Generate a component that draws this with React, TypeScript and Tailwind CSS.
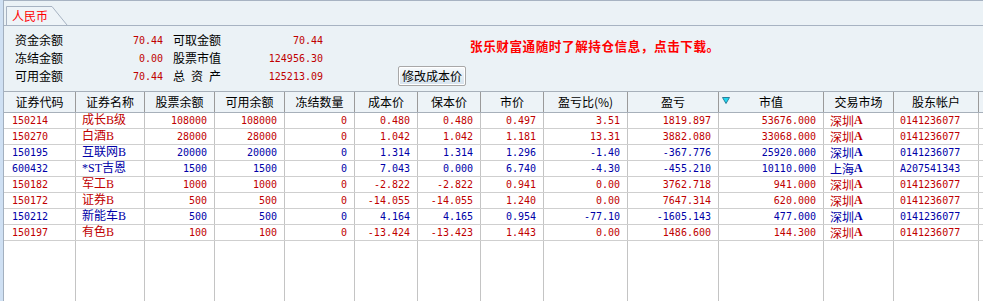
import React from "react";

type Row = {
  c: string[];
  red: boolean;
};

const rows: Row[] = [
  { c: ["150214", "成长B级", "108000", "108000", "0", "0.480", "0.480", "0.497", "3.51", "1819.897", "53676.000", "深圳", "0141236077"], red: true },
  { c: ["150270", "白酒B", "28000", "28000", "0", "1.042", "1.042", "1.181", "13.31", "3882.080", "33068.000", "深圳", "0141236077"], red: true },
  { c: ["150195", "互联网B", "20000", "20000", "0", "1.314", "1.314", "1.296", "-1.40", "-367.776", "25920.000", "深圳", "0141236077"], red: false },
  { c: ["600432", "*ST吉恩", "1500", "1500", "0", "7.043", "0.000", "6.740", "-4.30", "-455.210", "10110.000", "上海", "A207541343"], red: false },
  { c: ["150182", "军工B", "1000", "1000", "0", "-2.822", "-2.822", "0.941", "0.00", "3762.718", "941.000", "深圳", "0141236077"], red: true },
  { c: ["150172", "证券B", "500", "500", "0", "-14.055", "-14.055", "1.240", "0.00", "7647.314", "620.000", "深圳", "0141236077"], red: true },
  { c: ["150212", "新能车B", "500", "500", "0", "4.164", "4.165", "0.954", "-77.10", "-1605.143", "477.000", "深圳", "0141236077"], red: false },
  { c: ["150197", "有色B", "100", "100", "0", "-13.424", "-13.423", "1.443", "0.00", "1486.600", "144.300", "深圳", "0141236077"], red: true },
];

const headers = ["证券代码", "证券名称", "股票余额", "可用余额", "冻结数量", "成本价", "保本价", "市价", "盈亏比(%)", "盈亏", "市值", "交易市场", "股东帐户"];

const GRID = "grid grid-cols-[72px_69px_70px_70px_70px_63px_63px_63px_84px_91px_105px_70px_85px_1fr]";

const CJK = "font-['Noto_Sans_CJK_SC',sans-serif]";
const MONO = "font-['DejaVu_Sans_Mono','Noto_Sans_CJK_SC',monospace] text-[10px]";
const NAME = "font-['Liberation_Serif','Noto_Sans_CJK_SC',serif] text-[12px]";

function cellAlign(i: number) {
  if (i === 0) return "justify-start pl-[8px]";
  if (i === 1 || i === 11 || i === 12) return "justify-start pl-[6px]";
  return "justify-end pr-[7px]";
}

export default function App() {
  return (
    <div className={`w-[983px] h-[301px] overflow-hidden flex bg-[#ebf2f6] ${CJK}`}>
      <div className="w-[4px] h-full bg-[#cfe0f3] border-r border-[#a3b0bf] shrink-0" />
      <div className="flex-1 flex flex-col min-w-0">
        {/* Tab strip */}
        <div className="h-[26px] shrink-0 border-t border-b border-[#a7b3c2] flex items-end pl-[2px]">
          <div className="relative w-[62px] h-[19px] flex items-center pl-[6px]">
            <svg className="absolute inset-0" width="62" height="19" viewBox="0 0 62 19">
              <path d="M0.5 19 V0.5 H46 L61 19" fill="#eef4f8" stroke="#a7b3c2" strokeWidth="1" />
            </svg>
            <span className="relative text-[12px] leading-[14px] text-[#ff0000]">人民币</span>
          </div>
        </div>

        {/* Info panel */}
        <div className="h-[65px] shrink-0 flex">
          <div className="pl-[11px] pt-[5px] grid grid-cols-[60px_88px_10px_60px_90px] auto-rows-[18px] text-[12px] text-black">
            <span className="flex items-center">资金余额</span>
            <span className={`flex items-center justify-end text-[#c00000] ${MONO}`}>70.44</span>
            <span />
            <span className="flex items-center">可取金额</span>
            <span className={`flex items-center justify-end text-[#c00000] ${MONO}`}>70.44</span>

            <span className="flex items-center">冻结金额</span>
            <span className={`flex items-center justify-end text-[#c00000] ${MONO}`}>0.00</span>
            <span />
            <span className="flex items-center">股票市值</span>
            <span className={`flex items-center justify-end text-[#c00000] ${MONO}`}>124956.30</span>

            <span className="flex items-center">可用金额</span>
            <span className={`flex items-center justify-end text-[#c00000] ${MONO}`}>70.44</span>
            <span />
            <span className="flex items-center gap-[6px]">
              <span>总</span>
              <span>资</span>
              <span>产</span>
            </span>
            <span className={`flex items-center justify-end text-[#c00000] ${MONO}`}>125213.09</span>
          </div>
          <div className="ml-[75px] flex flex-col">
            <div className="ml-[72px] mt-[11px] h-[18px] flex items-center text-[12.6px] tracking-[0.55px] font-bold text-[#ff0000] whitespace-nowrap">
              张乐财富通随时了解持仓信息，点击下载。
            </div>
            <button className="mt-[11px] w-[68px] h-[20px] border border-[#a8a8a8] rounded-[2px] bg-gradient-to-b from-[#f7fafc] to-[#d6e3ee] text-[12px] leading-[16px] text-black flex items-center justify-center shadow-[inset_0_0_0_1px_#ffffff]">
              修改成本价
            </button>
          </div>
        </div>

        {/* Table */}
        <div className="flex-1 flex flex-col min-h-0 bg-white">
          <div className={`${GRID} h-[22px] shrink-0 border-t border-b border-[#a7b0ba] bg-[#edf3f7]`}>
            {headers.map((h, i) => (
              <div key={h} className="relative flex items-center justify-center border-r border-[#9a9a9a] text-[12px] text-black whitespace-nowrap">
                {i === 10 && (
                  <svg className="absolute left-[3px] top-[5px]" width="8" height="7" viewBox="0 0 8 7">
                    <path d="M0.5 0.5 H7.5 L4 6.5 Z" fill="#20d8f0" stroke="#2a7f9a" strokeWidth="1" />
                  </svg>
                )}
                {h}
              </div>
            ))}
            <div className="bg-[#edf3f7]" />
          </div>
          {rows.map((r, ri) => {
            const color = r.red ? "text-[#c00000]" : "text-[#0000a8]";
            return (
              <div key={ri} className={`${GRID} h-[16px] shrink-0 border-b border-[#cfcfcf] ${color}`}>
                {r.c.map((v, i) => {
                  let content: React.ReactNode = v;
                  let font = MONO;
                  if (i === 1) font = NAME;
                  if (i === 11) {
                    font = "text-[12px]";
                    content = (
                      <>
                        {v}
                        <span className="font-['Liberation_Serif',serif] font-bold text-[12px]">A</span>
                      </>
                    );
                  }
                  return (
                    <div key={i} className={`flex items-center leading-[15px] whitespace-nowrap border-r border-[#c4c4c4] ${cellAlign(i)} ${font}`}>
                      {content}
                    </div>
                  );
                })}
                <div />
              </div>
            );
          })}
          <div className={`${GRID} flex-1`}>
            {headers.map((h) => (
              <div key={h} className="border-r border-[#c4c4c4]" />
            ))}
            <div />
          </div>
        </div>
      </div>
    </div>
  );
}
